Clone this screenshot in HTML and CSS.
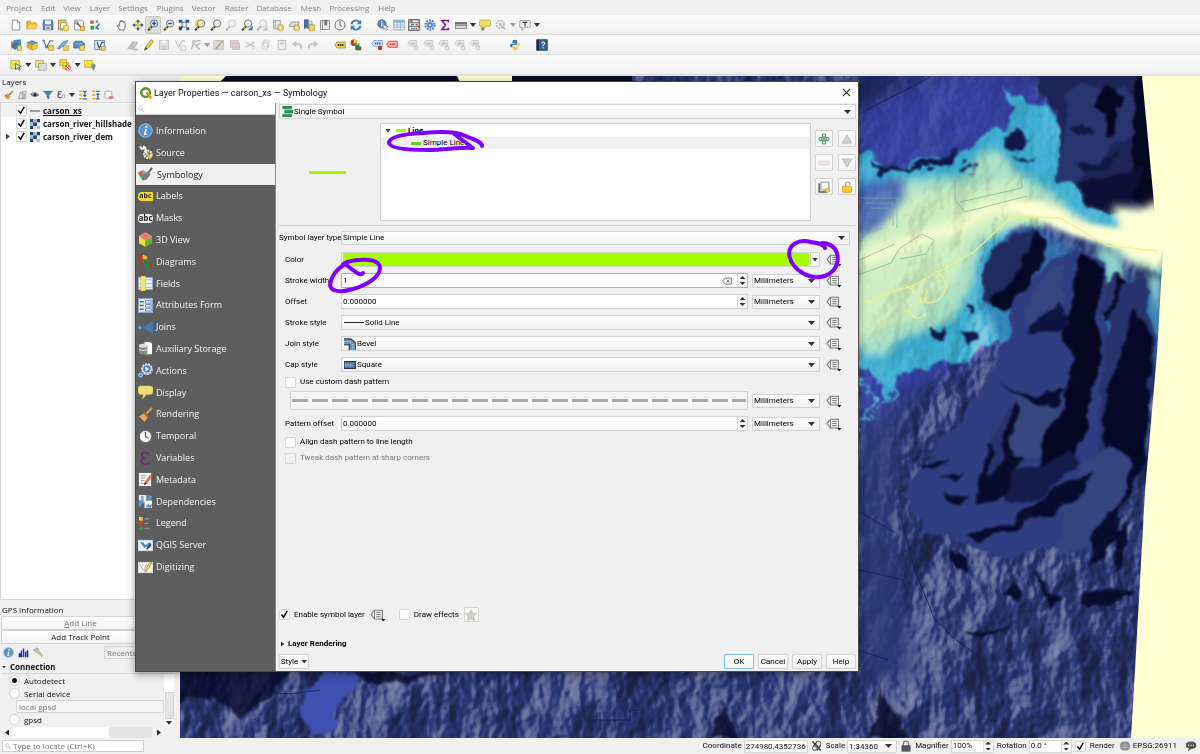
FILE: index.html
```html
<!DOCTYPE html>
<html lang="en">
  <head>
    <meta charset="UTF-8" />
    <title>QGIS</title>
    <meta name="viewport" content="width=device-width, initial-scale=1.0" />
    <link rel="stylesheet" href="styles.css">
  </head>
  <body>
    <!-- icon sprite -->
    <svg class="sprite" aria-hidden="true">
      <symbol id="new" viewBox="0 0 16 16"><path d="M3 1.500h7l3 3v10H3z" fill="#fff" stroke="#777"/><path d="M10 1.500v3h3" fill="none" stroke="#777"/></symbol>
      <symbol id="open" viewBox="0 0 16 16"><path d="M1 13V3h5l1 2h6v2" fill="#e8b830" stroke="#c79a1c"/><path d="M1 13L3.500 6.500H15L13 13z" fill="#fcd25a" stroke="#d8a628"/></symbol>
      <symbol id="save" viewBox="0 0 16 16"><rect x="1.500" y="1.500" width="13" height="13" rx="1" fill="#5b87bd" stroke="#3c648f"/><rect x="4" y="2" width="8" height="5" fill="#e8eef5"/><rect x="4" y="9" width="8" height="5.500" fill="#ddd"/><path d="M5 11h6M5 13h6" stroke="#777"/></symbol>
      <symbol id="layout" viewBox="0 0 16 16"><path d="M2 1.500h10v13H2z" fill="#f2cf4a" stroke="#8d7b32"/><rect x="5" y="5" width="8" height="8" fill="#fff" stroke="#888"/><rect x="9" y="9" width="6" height="6" fill="#fbe27a" stroke="#c79a1c"/></symbol>
      <symbol id="layoutmgr" viewBox="0 0 16 16"><path d="M2 1.500h10l2 2v11H2z" fill="#f5f5f5" stroke="#888"/><path d="M5 5l7 7" stroke="#666" stroke-width="2"/><circle cx="5" cy="5" r="2" fill="none" stroke="#666"/><rect x="10" y="10" width="5" height="5" fill="#f6d04d" stroke="#b98d1c"/></symbol>
      <symbol id="style" viewBox="0 0 16 16"><circle cx="4" cy="4" r="2.500" fill="#d9432f"/><rect x="9" y="2" width="3" height="3" fill="#777"/><rect x="2" y="9" width="5" height="5" fill="#3f9a56"/><path d="M9 13l5-7" stroke="#6d6d6d" stroke-width="2"/><path d="M9 10l4 4" stroke="#4379b5" stroke-width="2"/></symbol>
      <symbol id="pan" viewBox="0 0 16 16"><path d="M5 14.500L2 9.500c-.8-1.500.8-2 1.600-1L5 10V4c0-1.300 1.600-1.300 1.700 0V2.500c0-1.300 1.800-1.300 1.800 0V4c.2-1.300 1.800-1.200 1.800.2V5c.3-1 1.900-1 1.900.5V11l-1.500 3.500z" fill="#fff" stroke="#444"/></symbol>
      <symbol id="pansel" viewBox="0 0 16 16"><path d="M8 .5l2.500 2.500L8 5.500 5.500 3zM8 10.500l2.500 2.500L8 15.500 5.500 13zM3 5.500L5.500 8 3 10.500.5 8zM13 5.500L15.500 8 13 10.500 10.500 8z" fill="#2e5d98"/><path d="M8 5.800l2.200 2.200L8 10.200 5.800 8zM4 3.500l1.500 1.500M12 3.500L10.500 5M4 12.500L5.500 11M12 12.500L10.500 11" fill="#f3cf3f" stroke="#e8bf2e" stroke-width="1.800"/></symbol>
      <symbol id="lens" viewBox="0 0 16 16"><path d="M6.500 10L1.500 15" stroke="#2c2c2c" stroke-width="2.400"/><path d="M5 11.500l-1.500 1.500" stroke="#e6bd2e" stroke-width="2"/><circle cx="9.500" cy="6" r="4.800" fill="#e9f0f7" stroke="#666" stroke-width="1.200"/></symbol>
      <symbol id="zoomin" viewBox="0 0 16 16"><use href="#lens"/><path d="M9.500 3v6M6.500 6h6" stroke="#2b5ea0" stroke-width="1.800"/></symbol>
      <symbol id="zoomout" viewBox="0 0 16 16"><use href="#lens"/><path d="M6.500 6h6" stroke="#2b5ea0" stroke-width="2"/></symbol>
      <symbol id="zoomfull" viewBox="0 0 16 16"><path d="M1 1h5v4H1zM10 1h5v4h-5zM1 10h4v5H1zM11 11h4v4h-4z" fill="#2e5d98"/><circle cx="8.500" cy="7.500" r="3.500" fill="#dce8f5" stroke="#555"/><path d="M6 10l-3.500 4" stroke="#333" stroke-width="2"/></symbol>
      <symbol id="zoomsel" viewBox="0 0 16 16"><rect x="2" y="1" width="9" height="9" fill="#f4d43c"/><use href="#lens"/><circle cx="9.500" cy="6" r="3.500" fill="#faedaa"/></symbol>
      <symbol id="zoomlast" viewBox="0 0 16 16"><use href="#lens"/><path d="M15.500 9v6H9l3-3z" fill="#3f78b8"/></symbol>
      <symbol id="newmap" viewBox="0 0 16 16"><path d="M2 2h9v11H2zM4.500 2v11" fill="#e8e8e8" stroke="#888"/><rect x="8" y="8" width="7" height="7" rx="1" fill="#f6d659" stroke="#bb921e"/><path d="M11.500 9.500v4M9.500 11.500h4" stroke="#fff"/></symbol>
      <symbol id="new3d" viewBox="0 0 16 16"><path d="M1 9l4-5h10l-2 6H2z" fill="#dcdcdc" stroke="#888"/><rect x="8" y="8" width="7" height="7" rx="1" fill="#f6d659" stroke="#bb921e"/><path d="M11.500 9.500v4M9.500 11.500h4" stroke="#fff"/></symbol>
      <symbol id="bookmark" viewBox="0 0 16 16"><path d="M2 1h5v12l-2.500-2L2 13z" fill="#4077ab" stroke="#2e587f"/><path d="M8 3h4v5H8z" fill="#ddd" stroke="#999"/><rect x="8" y="8" width="7" height="7" fill="#f6d659" stroke="#bb921e"/></symbol>
      <symbol id="bookmarks" viewBox="0 0 16 16"><path d="M2 2h12v12H2z" fill="#ececec" stroke="#777"/><path d="M7 1h4v8L9 7.500 7 9z" fill="#777"/><path d="M4.500 2v12" stroke="#777"/></symbol>
      <symbol id="clock" viewBox="0 0 16 16"><circle cx="8" cy="8" r="6.700" fill="#f7f7f7" stroke="#666" stroke-width="1.300"/><path d="M8 3v5l3 2" fill="none" stroke="#444" stroke-width="1.200"/></symbol>
      <symbol id="refresh" viewBox="0 0 16 16"><path d="M2 7a6 6 0 0 1 10.500-3M14 9A6 6 0 0 1 3.500 12" fill="none" stroke="#3c7cc0" stroke-width="2.600"/><path d="M15 1v6H9zM1 15V9h6z" fill="#3c7cc0"/></symbol>
      <symbol id="identify" viewBox="0 0 16 16"><circle cx="6.500" cy="6.500" r="5.500" fill="#4e86c2" stroke="#2f5f96"/><path d="M6.500 5.500V10M6.500 3v1.500" stroke="#fff" stroke-width="2"/><path d="M8 7l7 3.500-3 .7 2 3-1.500 1-2-3-2 2z" fill="#fff" stroke="#555" stroke-width=".8"/></symbol>
      <symbol id="table" viewBox="0 0 16 16"><rect x="1" y="1.500" width="14" height="13" fill="#eef4fa" stroke="#7da0c5"/><rect x="1" y="1.500" width="14" height="3.500" fill="#8bb0d8"/><path d="M1 8h14M1 11h14M5.500 2v12M10 2v12" stroke="#8bb0d8"/></symbol>
      <symbol id="calc" viewBox="0 0 16 16"><rect x="1" y="1" width="14" height="14" fill="#f4f4f4" stroke="#555" stroke-width="1.500"/><path d="M1 5h14M1 10h14" stroke="#555"/><path d="M3 3h3M10 7.500h3" stroke="#d33" stroke-width="2.500"/><path d="M4 7.500h4" stroke="#396" stroke-width="2.500"/><path d="M4 12.500h8" stroke="#666" stroke-width="2" stroke-dasharray="2 1"/></symbol>
      <symbol id="gear" viewBox="0 0 16 16"><circle cx="8" cy="8" r="6" fill="none" stroke="#4e82bf" stroke-width="3" stroke-dasharray="2.400 1.360"/><circle cx="8" cy="8" r="4" fill="#4e82bf" stroke="#86aedb" /><circle cx="8" cy="8" r="1.500" fill="#e3edf8"/></symbol>
      <symbol id="sigma" viewBox="0 0 16 16"><path d="M12.500 4.500V2H4l4.500 6L4 14h8.500v-2.500" fill="none" stroke="#7a1d80" stroke-width="2.200"/></symbol>
      <symbol id="measure" viewBox="0 0 16 16"><rect x="0" y="4" width="16" height="3.500" fill="#777"/><rect x=".5" y="8.500" width="15" height="4" fill="#d5dde4" stroke="#777"/></symbol>
      <symbol id="tip" viewBox="0 0 16 16"><path d="M2.500 1.500h11q2 0 2 2v4q0 2-2 2H9L5 14V9.500H2.500q-2 0-2-2v-4q0-2 2-2z" fill="#efdf62" stroke="#b3a336"/><circle cx="5" cy="13" r="2.500" fill="#7aa15c"/></symbol>
      <symbol id="target" viewBox="0 0 16 16"><circle cx="7" cy="7" r="5" fill="none" stroke="#bbb" stroke-width="2.500" stroke-dasharray="2.600 1.300"/><circle cx="7" cy="7" r="2" fill="#bbb"/><path d="M9 9l5 5" stroke="#bbb" stroke-width="2"/></symbol>
      <symbol id="textann" viewBox="0 0 16 16"><path d="M1 2h14v9H7l-3 4v-4H1z" fill="#eef0f2" stroke="#8b8f94"/><path d="M5 4.500h6M8 4.500V10" stroke="#333" stroke-width="1.400"/></symbol>
      <symbol id="source" viewBox="0 0 16 16"><path d="M1 4l6-1 1 8-6 2z" fill="#e96c36"/><path d="M5 2l9-1v8l-8 2z" fill="#4c8fce" stroke="#2a5680" stroke-width=".7"/><path d="M2 8l8-2 3 5-7 3z" fill="#3a78b4" stroke="#2a5680" stroke-width=".7"/><rect x="10" y="9" width="5" height="6" fill="#f6d659" stroke="#bb921e"/></symbol>
      <symbol id="gpkg" viewBox="0 0 16 16"><path d="M1 5l7-3 7 3-7 3z" fill="#5f9bd2" stroke="#555" stroke-width=".6"/><path d="M1 5l7 3v7l-7-3z" fill="#e2ad26"/><path d="M15 5L8 8v7l7-3z" fill="#f7cf45" stroke="#8b6b12" stroke-width=".6"/></symbol>
      <symbol id="vec" viewBox="0 0 16 16"><path d="M2 2l4 9 5-9 4 1" fill="none" stroke="#4b6d88" stroke-width="1.400"/><circle cx="2" cy="2" r="1.500" fill="#4b6d88"/><circle cx="6" cy="11" r="1.700" fill="#4b6d88"/><rect x="9" y="9" width="6" height="6" fill="#f6d659" stroke="#bb921e"/></symbol>
      <symbol id="feather" viewBox="0 0 16 16"><path d="M1 13C4 7 9 3 14 2c-1 5-6 7-11 11z" fill="#85b5e0" stroke="#3e6c98"/><rect x="9" y="9" width="6" height="6" fill="#f6d659" stroke="#bb921e"/></symbol>
      <symbol id="mem" viewBox="0 0 16 16"><path d="M3 3h9l3 3v6H1V5z" fill="#5b8fc8" stroke="#34618f"/><path d="M3 6h9" stroke="#9dc0e4"/><rect x="9" y="9" width="6" height="6" fill="#f6d659" stroke="#bb921e"/></symbol>
      <symbol id="virtual" viewBox="0 0 16 16"><rect x="1" y="2" width="13" height="12" fill="#dbe9f5" stroke="#55799c"/><path d="M4 4l3 8 4-8 2 1" fill="none" stroke="#2e557b" stroke-width="1.500"/><rect x="10" y="10" width="5" height="5" fill="#f6d659" stroke="#bb921e"/></symbol>
      <symbol id="pencil" viewBox="0 0 16 16"><path d="M2 15l1.500-4.500L11 1l3 2.300L6 13z" fill="#f1cf45" stroke="#8f7727"/><path d="M2 15l1.500-4.500L6 13z" fill="#444"/></symbol>
      <symbol id="pencils" viewBox="0 0 16 16"><path d="M1 13l7-10 2 1-6 9zM5 13l7-9 2 1-6 9z" fill="#c9c9c9" stroke="#aaa"/><path d="M9 14h6" stroke="#aaa" stroke-width="2"/></symbol>
      <symbol id="gsave" viewBox="0 0 16 16"><rect x="2" y="2" width="12" height="12" fill="#ddd" stroke="#bbb"/><rect x="5" y="2" width="6" height="4" fill="#f6f6f6"/><path d="M5 10h6M5 12h6" stroke="#bbb"/></symbol>
      <symbol id="gvec" viewBox="0 0 16 16"><path d="M2 2l4 9 5-9 4 1" fill="none" stroke="#c2c2c2" stroke-width="1.500"/><rect x="9" y="9" width="6" height="6" fill="#eee" stroke="#c2c2c2"/></symbol>
      <symbol id="gvertex" viewBox="0 0 16 16"><path d="M2 14L5 3l9-1M3 4l10 10" fill="none" stroke="#b8b8b8" stroke-width="1.700"/><rect x="3" y="1" width="4" height="4" fill="#ccc"/><path d="M9 9l5-4" stroke="#b8b8b8" stroke-width="2"/></symbol>
      <symbol id="gedit" viewBox="0 0 16 16"><rect x="1" y="2" width="13" height="12" fill="#ded8d0" stroke="#c4beb6"/><path d="M4 13l9-11" stroke="#a9a49d" stroke-width="2"/></symbol>
      <symbol id="gdel" viewBox="0 0 16 16"><path d="M2 2h10v9H2zM5 5h9v9H5z" fill="#ddd0cf" stroke="#c0b4b3"/></symbol>
      <symbol id="cut" viewBox="0 0 16 16"><path d="M2 4l11 6M2 11l11-6" stroke="#c0c0c0" stroke-width="1.600"/><circle cx="12.500" cy="4.500" r="1.800" fill="none" stroke="#c0c0c0"/><circle cx="12.500" cy="11" r="1.800" fill="none" stroke="#c0c0c0"/></symbol>
      <symbol id="copy" viewBox="0 0 16 16"><path d="M5 1.500h7v9H5zM3 4.500h7v9H3z" fill="#f3f3f3" stroke="#c4c4c4"/></symbol>
      <symbol id="paste" viewBox="0 0 16 16"><rect x="3" y="2" width="10" height="12" fill="#eee" stroke="#c0c0c0" stroke-width="1.300"/><path d="M6 2h4M5 6h6" stroke="#c0c0c0" stroke-width="2"/></symbol>
      <symbol id="undo" viewBox="0 0 16 16"><path d="M13 13c2-5-1-7-7-6" fill="none" stroke="#c6c6c6" stroke-width="2.500"/><path d="M7 2v9L1 7z" fill="#c6c6c6"/></symbol>
      <symbol id="redo" viewBox="0 0 16 16"><path d="M3 13C1 8 4 6 10 7" fill="none" stroke="#c6c6c6" stroke-width="2.500"/><path d="M9 2v9l6-4z" fill="#c6c6c6"/></symbol>
      <symbol id="tag" viewBox="0 0 16 16"><path d="M1 8l3-4h11v8H4z" fill="#f2d43a" stroke="#a48a1d"/><path d="M5 8h8" stroke="#333" stroke-width="2.500" stroke-dasharray="2 .8"/></symbol>
      <symbol id="diagram" viewBox="0 0 16 16"><path d="M6 6V1a5 5 0 0 1 4.500 3z" fill="#f4cf2b"/><circle cx="5" cy="5" r="4.200" fill="#ca2f2b"/><path d="M5 5V.8A4.200 4.200 0 0 1 9 6z" fill="#f2cf31"/><path d="M5 5l4 1-4 3.200z" fill="#2b9145"/><path d="M7 8h3v7H7zM10 6h2.500v9H10z" fill="#1f8744"/><path d="M12 10h3v5h-3z" fill="#d2262a"/></symbol>
      <symbol id="tagpin" viewBox="0 0 16 16"><path d="M1 6l3-4h11v8H4z" fill="#cfe0f2" stroke="#6b96c4"/><path d="M5 6h8" stroke="#3f689a" stroke-width="2.500" stroke-dasharray="2 .8"/><circle cx="12" cy="12" r="3" fill="#c92e2e"/></symbol>
      <symbol id="tagred" viewBox="0 0 16 16"><path d="M1 7l3-4h11v8H4z" fill="#f9c8c8" stroke="#e24444" stroke-width="1.400"/><path d="M5 7h8" stroke="#e24444" stroke-width="2.500" stroke-dasharray="2 .8"/></symbol>
      <symbol id="gtag" viewBox="0 0 16 16"><path d="M1 6l3-4h9v7H4z" fill="#e4e4e0" stroke="#c3c3bf"/><path d="M5 6h6" stroke="#bbb" stroke-width="2"/><circle cx="12" cy="12" r="2.500" fill="#eee" stroke="#bbb" stroke-width="1.200"/></symbol>
      <symbol id="python" viewBox="0 0 16 16"><path d="M8 1c-3 0-3.500 1-3.500 3v1.500H8v.8H3C1 6.300 1 11 3 11h1.500V9q0-1.500 2-1.500h3q1.500 0 1.500-1.500V3.500Q11 1 8 1z" fill="#3a75ae"/><path d="M8 15c3 0 3.500-1 3.500-3v-1.500H8v-.8h5c2 0 2-4.700 0-4.700h-1.300v2q0 1.500-2 1.500h-3Q5.200 8.500 5.200 10v2.500Q5.200 15 8 15z" fill="#f4cc3b"/></symbol>
      <symbol id="help" viewBox="0 0 16 16"><rect x="1" y="1" width="14" height="14" fill="#38628f" stroke="#20364e"/><rect x="1" y="1" width="3" height="14" fill="#1c2d40"/><path d="M7.500 6q0-2 2-2t2 2q0 1-2 2.500v1M9.500 11v1.500" fill="none" stroke="#fff" stroke-width="1.400"/></symbol>
      <symbol id="select" viewBox="0 0 16 16"><rect x="1" y="2" width="12" height="11" fill="#f6e04f" stroke="#8b8b50" stroke-dasharray="2 1"/><path d="M7 6l8 4-3.500.7 2 3.300-1.500 1-2-3.500L7.500 14z" fill="#fff" stroke="#444"/></symbol>
      <symbol id="selectform" viewBox="0 0 16 16"><rect x="1" y="2" width="10" height="9" fill="#f3df6d" stroke="#9b9b9b"/><rect x="5" y="6" width="10" height="9" fill="#d8dde2" stroke="#999"/></symbol>
      <symbol id="deselect" viewBox="0 0 16 16"><path d="M1 1h9v8H1zM5 5h8v8H5z" fill="#f6df3c" stroke="#b19b2c"/><circle cx="11.500" cy="11.500" r="3.500" fill="#fff" stroke="#d33"/><path d="M9.500 9.500l4 4m0-4l-4 4" stroke="#d33" stroke-width="1.300"/></symbol>
      <symbol id="selectloc" viewBox="0 0 16 16"><rect x="1" y="2" width="10" height="9" fill="#f8e13d" stroke="#c1a62d"/><path d="M10 9a2.500 2.500 0 0 1 5 0q0 2-2.500 6Q10 11 10 9z" fill="#7c96ad" stroke="#55708a" stroke-width=".7"/></symbol>
      <symbol id="brush" viewBox="0 0 16 16"><path d="M8 8l6-6" stroke="#b56a28" stroke-width="2"/><path d="M1 9l5-3 4 4-3 4-3-.5z" fill="#eb9b3b" stroke="#a8661d" stroke-width=".6"/><path d="M3 8l4 4" stroke="#c33" stroke-width="1.500"/></symbol>
      <symbol id="addgroup" viewBox="0 0 16 16"><path d="M2 14l4-11 6 11zM9 2h5v12H9z" fill="#ddd" stroke="#888"/><circle cx="11" cy="9" r="3" fill="#aeb8b0"/></symbol>
      <symbol id="eye" viewBox="0 0 16 16"><path d="M1 7q6-6 13 1-7 5-13-1z" fill="#8ea4b8" stroke="#444"/><circle cx="8" cy="7.500" r="2.500" fill="#222"/></symbol>
      <symbol id="filter" viewBox="0 0 16 16"><path d="M1 2h14l-5.500 6v6l-3-1.500V8z" fill="#4c82b9" stroke="#345f8d"/></symbol>
      <symbol id="expr" viewBox="0 0 16 16"><path d="M9 3Q3 1 3.500 4.500 4 7 7 6.500 2.500 7 3 10q1 3.500 6 1.500" fill="none" stroke="#6c447a" stroke-width="1.700"/><path d="M10 13V8h4v5" fill="none" stroke="#888"/></symbol>
      <symbol id="expand" viewBox="0 0 16 16"><path d="M2 2h5M2 8h5M2 14h5" stroke="#e0a52a" stroke-width="2.500"/><path d="M8 2h6M8 14h6" stroke="#456f9c" stroke-width="2"/><path d="M11 3v6" stroke="#2d629c" stroke-width="2"/><path d="M8 8h6l-3 4z" fill="#2d629c"/></symbol>
      <symbol id="collapse" viewBox="0 0 16 16"><path d="M2 2h5M2 8h5M2 14h5" stroke="#e0a52a" stroke-width="2.500"/><path d="M8 2h6M8 14h6" stroke="#456f9c" stroke-width="2"/><path d="M11 13V7" stroke="#2d629c" stroke-width="2"/><path d="M8 8h6l-3-4z" fill="#2d629c"/></symbol>
      <symbol id="remove" viewBox="0 0 16 16"><rect x="1.500" y="2" width="11" height="11" rx="1" fill="#f4f4f4" stroke="#888"/><rect x="8" y="10" width="7" height="4" rx="1" fill="#ee6b6b"/></symbol>
      <symbol id="raster" viewBox="0 0 16 16"><path d="M0 0h16v16H0z" fill="#dfe9f3"/><path d="M0 0h5v5H0zM11 0h5v5h-5zM5 5h6v6H5zM0 11h5v5H0z" fill="#22456b"/><path d="M5 0h6v5H5zM11 11h5v5h-5zM0 5h5v6H0z" fill="#9dbbd6"/></symbol>
      <symbol id="search" viewBox="0 0 16 16"><circle cx="6.500" cy="6.500" r="4.500" fill="none" stroke="#999" stroke-width="1.500"/><path d="M10 10l5 5" stroke="#999" stroke-width="2"/></symbol>
      <symbol id="q" viewBox="0 0 16 16"><circle cx="7.500" cy="7.500" r="5.700" fill="none" stroke="#589632" stroke-width="3.400"/><path d="M7 6.500h3.500l5 5.500v3.500H13z" fill="#f0a31f"/><path d="M8 8l6 6" stroke="#589632" stroke-width="1.200"/></symbol>
      <!-- properties sidebar -->
      <symbol id="s-info" viewBox="0 0 16 16"><circle cx="8" cy="8" r="7.200" fill="#5b93d2" stroke="#a7c7ea"/><path d="M8.700 6.500L7.200 12h2" fill="none" stroke="#fff" stroke-width="1.800"/><circle cx="9" cy="4" r="1.200" fill="#fff"/></symbol>
      <symbol id="s-source" viewBox="0 0 16 16"><circle cx="10.500" cy="10" r="3.800" fill="none" stroke="#eee" stroke-width="2.500" stroke-dasharray="2 .8"/><path d="M2 1.500L4 4l2-.5L6.500 2q3 2 1 5L14 14" fill="none" stroke="#f2f2f2" stroke-width="2.200"/><path d="M9 9l5 5" stroke="#e5bd45" stroke-width="2.300"/></symbol>
      <symbol id="s-symb" viewBox="0 0 16 16"><path d="M0 6l6-3 4 5-5 6z" fill="#7fa6c4"/><path d="M0 6l4-2 2 4-4 2z" fill="#d75d55"/><path d="M3 12l-1-2 5-3 2 3-4 4z" fill="#59ad6a"/><path d="M7 8l3-3 3 3-4 5-4 1z" fill="#8a8172" stroke="#5f574c" stroke-width=".6"/><path d="M11 6l4-5" stroke="#635b52" stroke-width="2"/></symbol>
      <symbol id="s-3d" viewBox="0 0 16 16"><path d="M8 1l7 4-7 4-7-4z" fill="#ef7272" stroke="#fff" stroke-width=".5"/><path d="M1 5l7 4v7l-7-4z" fill="#f4dc35"/><path d="M15 5L8 9v7l7-4z" fill="#5fb531"/></symbol>
      <symbol id="s-fields" viewBox="0 0 16 16"><rect x=".5" y="1.500" width="15" height="13" fill="#eef4fa" stroke="#86a9cf"/><path d="M0 4h16M0 8h16M0 12h16" stroke="#9dbde0"/><rect x="3" y="0" width="5" height="16" fill="#f3e36e" stroke="#c8b43c" stroke-width=".5"/></symbol>
      <symbol id="s-form" viewBox="0 0 16 16"><rect x=".5" y=".5" width="15" height="15" fill="#e2ebf4" stroke="#86a9cf"/><path d="M2 4h4M2 8h4M2 12h4" stroke="#47688c" stroke-width="1.500"/><path d="M8 2.500h6v3H8zM8 7h6v2.500H8zM8 11h6v3H8z" fill="#fff" stroke="#5c83ad"/></symbol>
      <symbol id="s-join" viewBox="0 0 16 16"><path d="M5 8l11-7v14z" fill="#3f7ab5"/><circle cx="2" cy="8" r="1.800" fill="#6fa5da"/></symbol>
      <symbol id="s-aux" viewBox="0 0 16 16"><path d="M7 1h6l2 2v11H7z" fill="#fff"/><path d="M1 5v8q4 3 9 0V5z" fill="#8b8b8b"/><ellipse cx="5.500" cy="5" rx="4.500" ry="2" fill="#ddd"/><path d="M1 9q4 2.500 9 0" fill="none" stroke="#ddd"/></symbol>
      <symbol id="s-act" viewBox="0 0 16 16"><circle cx="9.500" cy="6.500" r="5" fill="#f2f6fb" stroke="#dde8f5" stroke-width="2.500" stroke-dasharray="2 1"/><circle cx="9.500" cy="6.500" r="4" fill="#4c84c2"/><path d="M8 4l4 2.500L8 9z" fill="#fff"/><circle cx="2.800" cy="13" r="2" fill="#5b93d2" stroke="#c6daf0"/></symbol>
      <symbol id="s-disp" viewBox="0 0 16 16"><path d="M3 1h10q3 0 3 3v3q0 3-3 3H9l-4 5 .5-5H3Q0 10 0 7V4q0-3 3-3z" fill="#ecdf7c" stroke="#cdbd4c" stroke-width=".6"/></symbol>
      <symbol id="s-rend" viewBox="0 0 16 16"><path d="M9 7l6-6" stroke="#e0a052" stroke-width="2"/><path d="M1 10l6-4 4 4-4 6z" fill="#e9a657"/><path d="M6 6l5 5" stroke="#9b6324" stroke-width="1.500"/></symbol>
      <symbol id="s-var" viewBox="0 0 16 16"><path d="M12 3Q5 0 4 4q0 3 5 3.500Q3 8 3.500 11.500 5 16 13 13" fill="none" stroke="#673272" stroke-width="1.900"/></symbol>
      <symbol id="s-meta" viewBox="0 0 16 16"><path d="M1 1h13v14H1z" fill="#f5f5f5"/><path d="M3 4h6M3 6.500h5M3 9h4M3 12h8" stroke="#999"/><path d="M7 11l6-8 2.500 1.500-6 8z" fill="#e46d40"/><path d="M7 11l2.500 1.500L6.500 14z" fill="#333"/></symbol>
      <symbol id="s-dep" viewBox="0 0 16 16"><path d="M1 1h8v8H1zM7 7h8v8H7z" fill="#f0f4f8"/><path d="M10 1l5 1-1 5-1.500-1.500-3 2-1-2 2.500-2zM1 7l5-1 0 5-1.500-1-2 4-2-1zM8 14l3-4 1 2 3-1-1 4-3-.5z" fill="#5d93d1"/><path d="M3 2h3v5H3z" fill="#7da9dc"/></symbol>
      <symbol id="s-leg" viewBox="0 0 16 16"><rect x="1" y="1" width="4" height="4" fill="#f5d32b"/><rect x="1" y="6" width="4" height="4" fill="#e23b24"/><circle cx="3" cy="13" r="2" fill="#24a148"/><path d="M7 3h5M7 8h4M7 13h5" stroke="#999" stroke-width="1.200"/></symbol>
      <symbol id="s-serv" viewBox="0 0 16 16"><rect x=".5" y="2.500" width="15" height="11" fill="#eef4f9" stroke="#d0d9e2"/><path d="M2 4l4 1 2 3 3-3 3 0-1 6-4-2-2 2z" fill="#4b83bd"/><path d="M9 12l5-5" stroke="#333" stroke-width="1.500"/></symbol>
      <symbol id="s-dig" viewBox="0 0 16 16"><rect x=".5" y="2.500" width="15" height="11" fill="#f1f1ef" stroke="#ddd"/><path d="M2 5l4 6 3-6 4 4" fill="none" stroke="#aaa"/><path d="M7 12l6-10 2 1-6 9z" fill="#ecd84e" stroke="#8a7c22" stroke-width=".6"/></symbol>
      <!-- symbology panel -->
      <symbol id="single" viewBox="0 0 16 16"><path d="M1 0h13v4H1zM4 6h12v4H4zM1 12h13v4H1z" fill="#1f9c57" stroke="#17643a" stroke-width=".8"/></symbol>
      <symbol id="plus" viewBox="0 0 16 16"><path d="M6 1.500h4V6h4.500v4H10v4.500H6V10H1.500V6H6z" fill="#e6f3e7" stroke="#4a8f56" stroke-width="1.300"/><path d="M8 4v8M4 8h8" stroke="#3c8549" stroke-width="1.300"/></symbol>
      <symbol id="minus" viewBox="0 0 16 16"><rect x="1" y="5.500" width="14" height="5" rx="1" fill="#f5e6e8" stroke="#dfc9cd"/></symbol>
      <symbol id="up" viewBox="0 0 16 16"><path d="M8 2.500l6.500 11h-13z" fill="#cfd2d4" stroke="#afb3b6"/></symbol>
      <symbol id="down" viewBox="0 0 16 16"><path d="M8 13.500l6.500-11h-13z" fill="#cfd2d4" stroke="#afb3b6"/></symbol>
      <symbol id="dup" viewBox="0 0 16 16"><path d="M1.500 3v11.500H12" fill="none" stroke="#555" stroke-width="2"/><path d="M4 1.500h10.500V12H4z" fill="#fff" stroke="#666"/><circle cx="12.500" cy="12.500" r="2.700" fill="#f6d659" stroke="#bb921e"/></symbol>
      <symbol id="lock" viewBox="0 0 16 16"><path d="M6 7V4q0-2.500 3-2.500T12 4v1" fill="none" stroke="#aaa" stroke-width="1.800"/><rect x="2" y="7" width="12" height="8" rx="1" fill="#f5cc2a" stroke="#c79d12"/></symbol>
      <symbol id="dd" viewBox="0 0 18 16"><path d="M5 2.500h9v10H5L1 7.500z" fill="#f2f2f2" stroke="#777" stroke-width="1.200"/><path d="M5 2.500v10" stroke="#777"/><path d="M7 5h5M7 7.500h5M7 10h5" stroke="#666"/><path d="M12.500 12.500h5l-2.500 3z" fill="#222"/></symbol>
      <symbol id="bevel" viewBox="0 0 16 16"><path d="M0 1h9l7 6v9H7V9H0z" fill="#6a90cc"/><path d="M0 1h9l7 6v9M0 9h7v7" fill="none" stroke="#27364f" stroke-width="1.600"/><path d="M0 5h8l4 4v7" fill="none" stroke="#ead94a" stroke-width="1.600" stroke-dasharray="2 2"/></symbol>
      <symbol id="cap" viewBox="0 0 18 12"><path d="M0 1h17v10H0z" fill="#5f87c4" stroke="#27364f" stroke-width="1.800"/><path d="M1 6h12" stroke="#ead94a" stroke-width="1.800" stroke-dasharray="2 2"/></symbol>
      <symbol id="clear" viewBox="0 0 16 16"><path d="M5 3h10v10H5L1 8z" fill="#f5f5f5" stroke="#666" stroke-width="1.300"/><path d="M7 5.500l5 5m0-5l-5 5" stroke="#666" stroke-width="1.400"/></symbol>
      <symbol id="star" viewBox="0 0 16 16"><path d="M8 1l2 4.500 5 .5-3.500 3.500 1 5.500L8 12.500 3.500 15l1-5.500L1 6l5-.5z" fill="#d5d0c8" stroke="#bdb8b0"/></symbol>
      <symbol id="chart" viewBox="0 0 16 16"><path d="M1 15V9h3v6zM4 15V5h2v10zM7 15V2h2v13zM10 15V7h2v8zM12.500 15V5H15v10z" fill="#1c2fc2"/></symbol>
      <symbol id="wrench" viewBox="0 0 16 16"><path d="M1 4l3 0 1-3q3 1 2.500 4L14 12l-1.500 2L6 7.500Q3 8 1 4z" fill="#d8d8d8" stroke="#555" stroke-width=".8"/><path d="M9 9l5 5" stroke="#e2cf3b" stroke-width="3"/></symbol>
      <symbol id="coord" viewBox="0 0 16 16"><path d="M2 2l11 12M3 9l5-7M8 14l5-7" stroke="#333" stroke-width="1.700"/><circle cx="10" cy="5" r="3.200" fill="#eee" stroke="#333"/><circle cx="5" cy="11" r="3" fill="#ddd" stroke="#333"/></symbol>
      <symbol id="padlock" viewBox="0 0 16 16"><path d="M4.500 8V5q0-3.500 3.500-3.500T11.500 5v3" fill="none" stroke="#777" stroke-width="1.700"/><rect x="2" y="7" width="12" height="8.500" fill="#555"/></symbol>
      <symbol id="globe" viewBox="0 0 16 16"><path d="M1 8q0-6 7-6t7 6-7 6-7-6z" fill="#888"/><path d="M1 7h14M2 10h12M8 2v12" stroke="#ddd" stroke-width=".7"/></symbol>
      <symbol id="msg" viewBox="0 0 16 16"><path d="M8 2q7 0 7 5t-7 5l-4 3 1-4Q1 10 1 7q0-5 7-5z" fill="#555"/><path d="M4 7h8" stroke="#fff" stroke-width="1.600" stroke-dasharray="1.600 1.600"/></symbol>
    </svg>

    <nav class="menubar">
      <a href="#">Project</a><a href="#">Edit</a><a href="#">View</a><a href="#">Layer</a><a href="#">Settings</a><a href="#">Plugins</a><a href="#">Vector</a><a href="#">Raster</a><a href="#">Database</a><a href="#">Mesh</a><a href="#">Processing</a><a href="#">Help</a>
    </nav>

    <div class="toolbar">
      <div class="group project-tools">
        <button aria-label="New project"><svg><use href="#new"/></svg></button>
        <button aria-label="Open project"><svg><use href="#open"/></svg></button>
        <button aria-label="Save project"><svg><use href="#save"/></svg></button>
        <button aria-label="New print layout"><svg><use href="#layout"/></svg></button>
        <button aria-label="Layout manager"><svg><use href="#layoutmgr"/></svg></button>
        <button aria-label="Style manager"><svg><use href="#style"/></svg></button>
      </div>
      <div class="group nav-tools">
        <button aria-label="Pan"><svg><use href="#pan"/></svg></button>
        <button aria-label="Pan to selection"><svg><use href="#pansel"/></svg></button>
        <button class="active" aria-label="Zoom in"><svg><use href="#zoomin"/></svg></button>
        <button aria-label="Zoom out"><svg><use href="#zoomout"/></svg></button>
        <button aria-label="Zoom full"><svg><use href="#zoomfull"/></svg></button>
        <button aria-label="Zoom to selection"><svg><use href="#zoomsel"/></svg></button>
        <button aria-label="Zoom to layer"><svg><use href="#lens"/></svg></button>
        <button disabled aria-label="Zoom to native resolution"><svg><use href="#lens"/></svg></button>
        <button aria-label="Zoom last"><svg><use href="#zoomlast"/></svg></button>
        <button disabled aria-label="Zoom next"><svg><use href="#zoomlast"/></svg></button>
        <button aria-label="New map view"><svg><use href="#newmap"/></svg></button>
        <button aria-label="New 3D map view"><svg><use href="#new3d"/></svg></button>
        <button aria-label="New bookmark"><svg><use href="#bookmark"/></svg></button>
        <button aria-label="Show bookmarks"><svg><use href="#bookmarks"/></svg></button>
        <button aria-label="Temporal controller"><svg><use href="#clock"/></svg></button>
        <button aria-label="Refresh"><svg><use href="#refresh"/></svg></button>
      </div>
      <div class="group attr-tools">
        <button aria-label="Identify"><svg><use href="#identify"/></svg></button>
        <button aria-label="Attribute table"><svg><use href="#table"/></svg></button>
        <button aria-label="Field calculator"><svg><use href="#calc"/></svg></button>
        <button aria-label="Toolbox"><svg><use href="#gear"/></svg></button>
        <button aria-label="Statistics"><svg><use href="#sigma"/></svg></button>
        <button aria-label="Measure"><svg><use href="#measure"/></svg></button>
      </div>
      <div class="group loose">
        <span class="arrow"></span>
        <button aria-label="Map tips"><svg><use href="#tip"/></svg></button>
        <button aria-label="Run feature action"><svg><use href="#target"/></svg></button>
        <span class="arrow light"></span>
        <button aria-label="Text annotation"><svg><use href="#textann"/></svg></button>
        <span class="arrow"></span>
      </div>
    </div>

    <div class="toolbar">
      <div class="group source-tools">
        <button aria-label="Data source manager"><svg><use href="#source"/></svg></button>
        <button aria-label="New GeoPackage layer"><svg><use href="#gpkg"/></svg></button>
        <button aria-label="New shapefile layer"><svg><use href="#vec"/></svg></button>
        <button aria-label="New SpatiaLite layer"><svg><use href="#feather"/></svg></button>
        <button aria-label="New scratch layer"><svg><use href="#mem"/></svg></button>
      </div>
      <button aria-label="New virtual layer"><svg><use href="#virtual"/></svg></button>
      <div class="group edit-tools">
        <button aria-label="Current edits"><svg><use href="#pencils"/></svg></button>
        <button aria-label="Toggle editing"><svg><use href="#pencil"/></svg></button>
        <button aria-label="Save edits"><svg><use href="#gsave"/></svg></button>
        <button aria-label="Add feature"><svg><use href="#gvec"/></svg></button>
        <button aria-label="Vertex tool"><svg><use href="#gvertex"/></svg></button>
        <span class="arrow light"></span>
        <button aria-label="Modify attributes"><svg><use href="#gedit"/></svg></button>
        <button aria-label="Delete selected"><svg><use href="#gdel"/></svg></button>
        <button aria-label="Cut"><svg><use href="#cut"/></svg></button>
        <button aria-label="Copy"><svg><use href="#copy"/></svg></button>
        <button aria-label="Paste"><svg><use href="#paste"/></svg></button>
        <button aria-label="Undo"><svg><use href="#undo"/></svg></button>
        <button aria-label="Redo"><svg><use href="#redo"/></svg></button>
      </div>
      <div class="group loose">
        <button aria-label="Layer labeling"><svg><use href="#tag"/></svg></button>
        <button aria-label="Layer diagrams"><svg><use href="#diagram"/></svg></button>
      </div>
      <div class="group label-tools">
        <button aria-label="Pinned labels"><svg><use href="#tagpin"/></svg></button>
        <button aria-label="Unplaced labels"><svg><use href="#tagred"/></svg></button>
      </div>
      <div class="group move-tools">
        <button aria-label="Pin label"><svg><use href="#gtag"/></svg></button>
        <button aria-label="Show label"><svg><use href="#gtag"/></svg></button>
        <button aria-label="Move label"><svg><use href="#gtag"/></svg></button>
        <button aria-label="Rotate label"><svg><use href="#gtag"/></svg></button>
        <button aria-label="Change label"><svg><use href="#gtag"/></svg></button>
      </div>
      <button class="python" aria-label="Python console"><svg><use href="#python"/></svg></button>
      <button aria-label="Help contents"><svg><use href="#help"/></svg></button>
    </div>

    <div class="toolbar">
      <div class="group select-tools">
        <button aria-label="Select features"><svg><use href="#select"/></svg></button><span class="arrow"></span>
        <button aria-label="Select by value"><svg><use href="#selectform"/></svg></button><span class="arrow"></span>
        <button aria-label="Deselect"><svg><use href="#deselect"/></svg></button><span class="arrow"></span>
        <button aria-label="Select by location"><svg><use href="#selectloc"/></svg></button>
      </div>
    </div>

    <main class="workspace">
      <aside class="dock">
        <h2>Layers</h2>
        <div class="dock-tools">
          <button aria-label="Layer styling"><svg><use href="#brush"/></svg></button>
          <button aria-label="Add group"><svg><use href="#addgroup"/></svg></button>
          <button aria-label="Map themes"><svg><use href="#eye"/></svg></button>
          <button aria-label="Filter legend"><svg><use href="#filter"/></svg></button>
          <button aria-label="Filter by expression"><svg><use href="#expr"/></svg></button>
          <span class="arrow"></span>
          <button aria-label="Expand all"><svg><use href="#expand"/></svg></button>
          <button aria-label="Collapse all"><svg><use href="#collapse"/></svg></button>
          <button aria-label="Remove layer"><svg><use href="#remove"/></svg></button>
        </div>
        <ul class="layers">
          <li class="current"><input type="checkbox" id="l1" checked><svg viewBox="0 0 10 10"><path d="M0 5h10" stroke="#4a4462"/></svg><label for="l1"><u>carson_xs</u></label></li>
          <li><input type="checkbox" id="l2" checked><svg><use href="#raster"/></svg><label for="l2">carson_river_hillshade</label></li>
          <li class="closed"><input type="checkbox" id="l3" checked><svg><use href="#raster"/></svg><label for="l3">carson_river_dem</label></li>
        </ul>
        <h2>GPS Information</h2>
        <button class="wide" disabled><u>A</u>dd Line</button>
        <button class="wide">Add Track Point</button>
        <div class="gps-tools">
          <button aria-label="Position"><svg><use href="#s-info"/></svg></button>
          <button aria-label="Signal"><svg><use href="#chart"/></svg></button>
          <button aria-label="Options"><svg><use href="#wrench"/></svg></button>
          <button class="recenter">Recenter</button>
        </div>
        <h3>Connection</h3>
        <div class="gps-scroll">
          <div class="gps-list">
            <label><input type="radio" name="gps" checked>Autodetect</label>
            <label><input type="radio" name="gps">Serial device</label>
            <input type="text" value="local gpsd" aria-label="Device" disabled>
            <label><input type="radio" name="gps">gpsd</label>
          </div>
          <div class="vbar"><span></span><i class="arrow"></i></div>
        </div>
        <div class="hbar"><i class="left"></i><span></span><i class="right"></i></div>
      </aside>

      <svg class="map" viewBox="180 76 1020 662" preserveAspectRatio="xMinYMin slice" aria-label="Map canvas">
        <defs>
          <filter id="relief" x="0" y="0" width="100%" height="100%" color-interpolation-filters="sRGB">
            <feTurbulence type="fractalNoise" baseFrequency=".012 .009" numOctaves="5" seed="21"/>
            <feDiffuseLighting surfaceScale="22" lighting-color="#fff"><feDistantLight azimuth="205" elevation="32"/></feDiffuseLighting>
            <feGaussianBlur stdDeviation=".6"/>
          </filter>
          <filter id="rough" x="-10%" y="-10%" width="120%" height="120%" color-interpolation-filters="sRGB">
            <feTurbulence type="fractalNoise" baseFrequency=".07" numOctaves="4" seed="3"/>
            <feDisplacementMap in="SourceGraphic" scale="18" xChannelSelector="R" yChannelSelector="G"/>
            <feGaussianBlur stdDeviation="1"/>
          </filter>
          <filter id="craggy" x="-10%" y="-10%" width="120%" height="120%" color-interpolation-filters="sRGB">
            <feTurbulence type="fractalNoise" baseFrequency=".04" numOctaves="4" seed="8"/>
            <feDisplacementMap in="SourceGraphic" scale="16" xChannelSelector="R" yChannelSelector="G"/>
            <feGaussianBlur stdDeviation="1.300"/>
          </filter>
          <filter id="soft2" x="-20%" y="-20%" width="140%" height="140%"><feGaussianBlur stdDeviation="2"/></filter>
          <filter id="soft4" x="-20%" y="-20%" width="140%" height="140%"><feGaussianBlur stdDeviation="4"/></filter>
          <filter id="soft9" x="-30%" y="-30%" width="160%" height="160%"><feGaussianBlur stdDeviation="9"/></filter>
          <mask id="upland" maskUnits="userSpaceOnUse" x="180" y="76" width="1020" height="662">
            <rect x="180" y="76" width="1020" height="662" fill="#fff"/>
            <path d="M850 60h180l40 110 30 42 62 2v60l-60-20-60-28-60 20-14 96-60 70-20 90 30 180h-60z" fill="#3a3a3a" filter="url(#soft9)"/>
          </mask>
        </defs>
        <rect x="180" y="76" width="1020" height="662" fill="#2c3a78"/>
        <path d="M850 76h190l25 60v70L990 350 900 400l-50 30z" fill="#3641a0" filter="url(#soft9)"/>
        <path d="M850 70h100l-100 44z" fill="#1f2860" filter="url(#soft9)"/>
        <g filter="url(#rough)">
          <path d="M850 153l24 2 16 14 26-8 50-6 14-16 14-8 16-8 2-22-8-14 12 8 12 10 20-4 12 22 2 28 12 22 20 20 22 18 50 2 12-12 10 30 4 70-4 50-10-40-14-34-32-22-36-20-50-18-44 16-8 40 4 34 18 6-4 26-30 6-16 20-24-6-16 12-20-2-14 20-6 18-6-26-14-10-16-4z" fill="#3caed2"/>
        </g>
        <path d="M858 200l42-20 66-4 14-24 18-2 22 24 30 16 30 32 24 10 46-2 12-14 8 40-12 18-36-16-40-24-60-12-40 22-12 46-18 30-24 10-30 10-14 16-22-2-16-18z" fill="#a9e0c4" filter="url(#soft4)"/>
        <path d="M862 236l50-42 60-6 40-10 30 24 24 18-60 6-34 14-20 46-38 30-34 18-26 4z" fill="#cdeec0" filter="url(#soft4)"/>
        <path d="M850 184l54-6v20l-24 30-30 14z" fill="#4058b4" opacity=".8" filter="url(#soft4)"/>
        <path d="M850 262l40-12 30-12 40-12 28-18 32-2 38 8 30 16 30 8 42 2" fill="none" stroke="#ffffd0" stroke-width="14" opacity=".8" filter="url(#soft4)"/>
        <g mask="url(#upland)" class="shade"><rect x="180" y="76" width="1020" height="662" filter="url(#relief)"/></g>
        <!-- hills -->
        <g filter="url(#craggy)">
          <path d="M1038 66h106l12 130-20 12-26 8-24-10-18-26-10-30-2-40-20-26z" fill="#1c2556"/>
          <path d="M1066 96l24-12 20 12 20-10 8 20-4 30-22 10-10 20-26 18-20-6z" fill="#29356f"/>
          <path d="M1104 84l22 12-10 12-4 26-8 4 2-24-12-10zM1136 76h10l14 136-24-8-14-10 10-30 2-36z" fill="#040720"/>
          <path d="M1078 186l40-10 24-10-8 34-14 14-34-12z" fill="#0b1034"/>
          <path d="M1066 130l20-8 10 8-18 6zM1080 166l24-6 18-8-10 14-24 8z" fill="#101742"/>
        </g>
        <path d="M1000 206l40-4 36 22 50 6 36-12v40l-40-10-50-14-36-18z" fill="#ffffd4" filter="url(#soft2)"/>
        <path d="M1112 206l30 3 16-10 8 34-4 36-36-12z" fill="#ffffd4" filter="url(#soft4)"/>
        <path d="M1096 246l24 8 4 24-14 14-12-20zM1148 276l14 0-4 76-10-40z" fill="#8fd6cc" filter="url(#soft4)"/>
        <g fill="none" stroke="#f0f08a" stroke-width="1.300" opacity=".9"><path d="M855 299q16 8 28-5l30-8 25-14 36-20 38-36 48 2 48 28 50 5"/><path d="M905 285q20 12 15 18M935 270q20 16 3 30-20 9-10-10M910 310q4 14 16 4"/></g>
        <g fill="none" stroke="#78ab9c" opacity=".7"><path d="M855 276l36-13 8-14 23-15 12 6-8 14-26 5M960 202l62-14v-18M965 212l62-16M955 180v20l10 12M855 262l40-18"/><path d="M862 198h35v30M866 203h27v22M870 208h20v12M862 236l20-8"/></g>
        <g fill="#11184a" filter="url(#rough)">
          <path d="M870 158l18 8 30-2 24-6 16-12-6 16-22 8-26 0-24 6zM928 330h16v8h-16zM958 334l14-4 6 6-10 8zM966 308h8v5h-8zM1010 134l10-5 8 10-6 14-14-4zM1012 157l28 2-20 3zM975 160l-8 14-6-2z"/>
        </g>
        <g filter="url(#soft4)">
          <path d="M984 306q-8-42 16-64 22-16 44-8l30 16 30 14 2 40 18-22 22 0 16 34 0 50-60 20-100-40z" fill="#2a78b4" opacity=".8"/>
        </g>
        <g filter="url(#craggy)">
          <path d="M983 302q-6-34 16-58 22-18 42-10l8 10-22 40-18 26z" fill="#202b5f"/>
          <path d="M1036 232l12 8-8 22-26 46-22 0-2-10 22-16z" fill="#060a26"/>
          <path d="M1006 340l8-36 32-46 28-8 30 14 2 70 0 140-44 70-62 14-74-28-24-40 56-66 28-46z" fill="#2f3e80"/>
          <path d="M1048 266l14-6-2 40-10 20-24 6 4-26z" fill="#35457f"/>
          <path d="M1078 254l26 14-8 56 6 32-18 82-20 30-32 20 10-55 20-26 12-48-14-22 12-34z" fill="#050823"/>
          <path d="M1058 300l14 28-38 6-10-4 20-12z" fill="#0d1440"/>
          <path d="M1016 400l12 18-4 34-12 42-36 10 10-50 20-30z" fill="#080c2c"/>
          <path d="M996 436l14-34 0 24-10 40-12 8z" fill="#26336e"/>
          <path d="M1104 286q10-18 20-10l0 24-12 20-10-6z" fill="#2a376f"/>
          <path d="M1118 274l8 6-8 42-12 0z" fill="#060a26"/>
          <path d="M1122 282l22-4 12 66-2 40-12 60-4 34-20 30-30 34 10-80 6-120z" fill="#26336c"/>
          <path d="M1138 306l14 40-2 52-6 60-20 46-34 40 18-74-6-50 16-64z" fill="#060a28"/>
          <path d="M1084 460l26-14 22 12-10 42-30 46-34 8 10-60z" fill="#34447f"/>
          <path d="M1014 388l28 12 26-16-14 34-20 40-22 0 6-40z" fill="#36477f"/>
          <path d="M1010 474l-4 30 34-4 40-36-12-16-30 20z" fill="#141c4c"/>
        </g>
        <g fill="#080d2e" filter="url(#craggy)">
          <path d="M916 464l34-4-12 7zM940 478l24-8-10 10zM940 494l28 2-6 10-18-6zM965 536l46-14 40-30 44-22-22 36-46 16-44 20zM1000 384l30 12 26-2 24-22-26 32-22-2zM1094 536l14-26 14-4-8 32-12 22-14 6zM1114 530l14-8-6 40-10 10zM950 550l14 10 6 12-14-4zM1034 564l14 26 14 8-12 14zM964 632l48-4-20 6-26 2zM1080 600l28-12 30 2-20 10-28 8zM1010 580l12 14-6 10-14-8z"/>
        </g>
        <path d="M855 380l14 6 6 12-6 16-14 16M874 412l20-12v-26l20-28" fill="none" stroke="#50bfd4" stroke-width="2" filter="url(#rough)"/>
        <path d="M322 672l-22 34 8 32h22l8-34 30-32z" fill="#4050b0" filter="url(#rough)"/>
        <path d="M180 668h110l-20 30-30 20-30-24-30 6zM350 672h100l-80 14zM720 700l20 38h-24zM880 690l30 48h-40z" fill="#070b2a" opacity=".8" filter="url(#craggy)"/>
        <path d="M900 514l14 54 20 50 20 20 24 18M860 512l34 20M860 570l44 10M858 650l30 10M230 690l60 4 30-4M850 119l80-42M590 720h40v-10h10M600 712v18M615 712v18" fill="none" stroke="#141d50" opacity=".8"/>
        <path d="M225 76h232l4 6H218zM512 76h120v6H512z" fill="#070b25"/>
        <path d="M180 76h46l-8 8h-38zM457 76h55v8h-51zM1142 76l13 138 2 24 6 14-2 32-4 69-12 138-10 179-4 68h69V76z" fill="#ffffd4"/>
      </svg>
    </main>

    <footer class="statusbar">
      <div class="locator"><svg><use href="#search"/></svg><input type="text" placeholder="Type to locate (Ctrl+K)" aria-label="Locate"></div>
      <label for="coord-in">Coordinate</label><input class="coord" id="coord-in" type="text" value="274980,4352736">
      <svg><use href="#coord"/></svg>
      <label for="scale">Scale</label><select id="scale" class="scale"><option>1:34360</option></select>
      <svg><use href="#padlock"/></svg>
      <label for="mag">Magnifier</label><div class="spin"><input id="mag" type="text" value="100%"><span class="steps"><button aria-label="Increase"></button><button aria-label="Decrease"></button></span></div>
      <label for="rot">Rotation</label><div class="spin"><input id="rot" type="text" value="0.0 °"><span class="steps"><button aria-label="Increase"></button><button aria-label="Decrease"></button></span></div>
      <label class="check"><input type="checkbox" checked>Render</label>
      <button class="crs"><svg><use href="#globe"/></svg>EPSG:26911</button>
      <button class="msgs" aria-label="Messages"><svg><use href="#msg"/></svg></button>
    </footer>

    <section class="dialog" role="dialog" aria-label="Layer Properties">
      <header>
        <svg><use href="#q"/></svg>
        <h1>Layer Properties — carson_xs — Symbology</h1>
        <button class="close" aria-label="Close"><svg viewBox="0 0 10 10"><path d="M1 1l8 8M9 1L1 9" stroke="#222" stroke-width="1.200"/></svg></button>
      </header>
      <div class="dialog-body">
        <nav class="pages">
          <div class="page-search"><svg><use href="#search"/></svg><input type="text" aria-label="Search pages"></div>
          <ul>
            <li><a href="#"><svg><use href="#s-info"/></svg>Information</a></li>
            <li><a href="#"><svg><use href="#s-source"/></svg>Source</a></li>
            <li><a href="#" class="selected"><svg><use href="#s-symb"/></svg>Symbology</a></li>
            <li><a href="#"><span class="abc yellow">abc</span>Labels</a></li>
            <li><a href="#"><span class="abc">abc</span>Masks</a></li>
            <li><a href="#"><svg><use href="#s-3d"/></svg>3D View</a></li>
            <li><a href="#"><svg><use href="#diagram"/></svg>Diagrams</a></li>
            <li><a href="#"><svg><use href="#s-fields"/></svg>Fields</a></li>
            <li><a href="#"><svg><use href="#s-form"/></svg>Attributes Form</a></li>
            <li><a href="#"><svg><use href="#s-join"/></svg>Joins</a></li>
            <li><a href="#"><svg><use href="#s-aux"/></svg>Auxiliary Storage</a></li>
            <li><a href="#"><svg><use href="#s-act"/></svg>Actions</a></li>
            <li><a href="#"><svg><use href="#s-disp"/></svg>Display</a></li>
            <li><a href="#"><svg><use href="#s-rend"/></svg>Rendering</a></li>
            <li><a href="#"><svg><use href="#clock"/></svg>Temporal</a></li>
            <li><a href="#"><svg><use href="#s-var"/></svg>Variables</a></li>
            <li><a href="#"><svg><use href="#s-meta"/></svg>Metadata</a></li>
            <li><a href="#"><svg><use href="#s-dep"/></svg>Dependencies</a></li>
            <li><a href="#"><svg><use href="#s-leg"/></svg>Legend</a></li>
            <li><a href="#"><svg><use href="#s-serv"/></svg>QGIS Server</a></li>
            <li><a href="#"><svg><use href="#s-dig"/></svg>Digitizing</a></li>
          </ul>
        </nav>

        <div class="panel">
          <div class="combo renderer"><svg><use href="#single"/></svg><select aria-label="Renderer"><option>Single Symbol</option></select></div>

          <div class="symbol">
            <div class="preview"><span></span></div>
            <ul class="symbol-tree">
              <li class="root"><span class="swatch"></span>Line</li>
              <li class="child"><span class="swatch"></span>Simple Line</li>
            </ul>
            <div class="symbol-buttons">
              <button aria-label="Add symbol layer"><svg><use href="#plus"/></svg></button>
              <button aria-label="Move up"><svg><use href="#up"/></svg></button>
              <button aria-label="Remove symbol layer"><svg><use href="#minus"/></svg></button>
              <button aria-label="Move down"><svg><use href="#down"/></svg></button>
              <button aria-label="Duplicate"><svg><use href="#dup"/></svg></button>
              <button aria-label="Lock color"><svg><use href="#lock"/></svg></button>
            </div>
          </div>

          <div class="layer-type"><label for="type">Symbol layer type</label><select id="type"><option>Simple Line</option></select></div>

          <div class="form">
            <label for="color">Color</label>
            <div class="span color"><button id="color" aria-label="Color"></button><button class="drop" aria-label="Color menu"><span class="arrow"></span></button></div>
            <button class="dd" aria-label="Data defined color"><svg><use href="#dd"/></svg></button>

            <label for="width">Stroke width</label>
            <div class="spin focus"><input id="width" type="text" value="1"><button class="clear" aria-label="Clear"><svg><use href="#clear"/></svg></button><span class="steps"><button aria-label="Increase"></button><button aria-label="Decrease"></button></span></div>
            <select aria-label="Width unit"><option>Millimeters</option></select>
            <button class="dd" aria-label="Data defined width"><svg><use href="#dd"/></svg></button>

            <label for="offset">Offset</label>
            <div class="spin"><input id="offset" type="text" value="0.000000"><span class="steps"><button aria-label="Increase"></button><button aria-label="Decrease"></button></span></div>
            <select aria-label="Offset unit"><option>Millimeters</option></select>
            <button class="dd" aria-label="Data defined offset"><svg><use href="#dd"/></svg></button>

            <label for="stroke">Stroke style</label>
            <div class="combo span"><span class="solid"></span><select id="stroke"><option>Solid Line</option></select></div>
            <button class="dd" aria-label="Data defined stroke style"><svg><use href="#dd"/></svg></button>

            <label for="join">Join style</label>
            <div class="combo span"><svg><use href="#bevel"/></svg><select id="join"><option>Bevel</option></select></div>
            <button class="dd" aria-label="Data defined join style"><svg><use href="#dd"/></svg></button>

            <label for="cap-in">Cap style</label>
            <div class="combo span"><svg><use href="#cap"/></svg><select id="cap-in"><option>Square</option></select></div>
            <button class="dd" aria-label="Data defined cap style"><svg><use href="#dd"/></svg></button>
          </div>

          <label class="check dash-check"><input type="checkbox">Use custom dash pattern</label>

          <div class="form dash-form">
            <button class="dashes" aria-label="Dash pattern"><span></span></button>
            <select aria-label="Dash unit"><option>Millimeters</option></select>
            <button class="dd" aria-label="Data defined dash"><svg><use href="#dd"/></svg></button>

            <label for="poff">Pattern offset</label>
            <div class="spin"><input id="poff" type="text" value="0.000000"><span class="steps"><button aria-label="Increase"></button><button aria-label="Decrease"></button></span></div>
            <select aria-label="Pattern offset unit"><option>Millimeters</option></select>
            <button class="dd" aria-label="Data defined pattern offset"><svg><use href="#dd"/></svg></button>
          </div>

          <div class="dash-options">
            <label class="check"><input type="checkbox">Align dash pattern to line length</label>
            <label class="check off"><input type="checkbox" disabled>Tweak dash pattern at sharp corners</label>
          </div>

          <div class="effects">
            <label class="check"><input type="checkbox" checked>Enable symbol layer</label>
            <button class="dd" aria-label="Data defined enabled"><svg><use href="#dd"/></svg></button>
            <label class="check draw"><input type="checkbox">Draw effects</label>
            <button class="fx" aria-label="Customize effects"><svg><use href="#star"/></svg></button>
          </div>
          <h3 class="rendering">Layer Rendering</h3>
          <div class="actions">
            <button class="style-menu">Style <span class="arrow"></span></button>
            <button class="default">OK</button>
            <button>Cancel</button>
            <button>Apply</button>
            <button>Help</button>
          </div>
        </div>
      </div>
    </section>

    <!-- hand drawn highlights -->
    <svg class="marks" viewBox="0 0 1200 754" aria-hidden="true">
      <path d="M482 146c0-5-12-8-19-11-9-4-28-3-40-2-20 1-34 4-34 10 1 6 22 7 39 7 18 0 30-3 45-2l-20-15"/>
      <path d="M363 273c-3 3-6 0-10-3q-4-3-8-6c-8 5-14 13-15 21 1 8 14 7 23 4 14-4 27-12 27-21 0-8-12-9-22-8-9 1-15 3-15 5"/>
      <path d="M825 248c-1-4-7-5-14-6-8-2-15-1-20 5-5 8 1 19 10 25 9 6 20 7 28 2 8-5 11-15 7-23-2-5-8-8-14-8"/>
    </svg>
  </body>
</html>
```
FILE: styles.css
```css
* {
  box-sizing: border-box;
}

body {
  margin: 0;
  height: 100vh;
  display: flex;
  flex-direction: column;
  overflow: hidden;
  font-family: "Open Sans", "Noto Sans", sans-serif;
  font-size: 8px;
  line-height: 12px;
  color: #111;
  background: #f0f0f0;
}

button,
input,
select {
  font: inherit;
  color: inherit;
  margin: 0;
  padding: 0;
  border: 1px solid #d2d2d2;
  border-radius: 1px;
  background: #fff;
  min-width: 0;
}

button {
  display: flex;
  align-items: center;
  justify-content: center;
  background: linear-gradient(#fff, #f3f3f3);
}

select {
  appearance: none;
  height: 14px;
  padding: 0 1px;
  background: url("data:image/svg+xml,%3Csvg xmlns='http://www.w3.org/2000/svg' width='7' height='4'%3E%3Cpath d='M0 0h7L3.500 4z' fill='%23333'/%3E%3C/svg%3E") no-repeat right 4px center, linear-gradient(#fff, #f1f1f1);
}

ul {
  list-style: none;
  margin: 0;
  padding: 0;
}

h1, h2, h3 {
  margin: 0;
  font-size: 8px;
  font-weight: 400;
}

h3 {
  font-weight: 700;
}

svg {
  flex: none;
  width: 12px;
  height: 12px;
}

.sprite {
  display: none;
}

.arrow {
  flex: none;
  width: 6px;
  height: 4px;
  background: #333;
  clip-path: polygon(0 0, 100% 0, 50% 100%);
}

.arrow.light {
  background: #999;
}

input[type="checkbox"] {
  appearance: none;
  flex: none;
  width: 11px;
  height: 11px;
  border: 1px solid #d6d6d6;
}

input[type="checkbox"]:checked {
  background: #fff url("data:image/svg+xml,%3Csvg xmlns='http://www.w3.org/2000/svg' viewBox='0 0 10 10'%3E%3Cpath d='M1.500 5l2.500 3 4-7' fill='none' stroke='%23000' stroke-width='1.600'/%3E%3C/svg%3E") center / 9px no-repeat;
}

input[type="checkbox"]:disabled {
  background: #f0f0f0;
}

.check {
  display: flex;
  align-items: center;
  gap: 4px;
}

/* menu and toolbars */
.menubar {
  display: flex;
  align-items: center;
  gap: 8px;
  height: 15px;
  padding: 1px 6px 0;
}

.menubar a {
  color: #858585;
  text-decoration: none;
}

.menubar a:nth-child(even) {
  margin-left: 1px;
}

.toolbar {
  display: flex;
  align-items: center;
  gap: 7px;
  height: 20px;
  padding-left: 9px;
  background: linear-gradient(#fbfbfb, #efefef);
  border-top: 1px solid #fff;
  border-bottom: 1px solid #dedede;
}

.toolbar button {
  flex: none;
  width: 14px;
  height: 16px;
  border: 0;
  background: none;
}

.toolbar button.active {
  background: #dcdcdc;
  outline: 1px solid #c4c4c4;
}

.toolbar button:disabled {
  opacity: 0.35;
}

.group {
  display: flex;
  align-items: center;
  justify-content: space-between;
}

.project-tools {
  width: 93px;
  margin-right: 6px;
}

.nav-tools {
  width: 248px;
  margin-right: 6px;
}

.attr-tools {
  width: 92px;
  margin-right: -5px;
}

.loose {
  gap: 2px;
}

.source-tools {
  width: 77px;
}

.edit-tools {
  width: 194px;
  margin: 0 6px 0 12px;
}

.label-tools {
  width: 29px;
}

.move-tools {
  width: 76px;
}

.python {
  margin: 0 6px 0 19px;
}

.select-tools {
  width: 88px;
}

/* left dock */
.workspace {
  flex: 1;
  min-height: 0;
  display: flex;
  border-top: 1px solid #e4e4e4;
}

.dock {
  flex: none;
  width: 180px;
  display: flex;
  flex-direction: column;
}

.dock h2 {
  padding-left: 2px;
}

.dock-tools {
  display: flex;
  align-items: center;
  gap: 3px;
  height: 14px;
  padding-left: 4px;
}

.dock-tools button,
.gps-tools button {
  width: 10px;
  height: 10px;
  border: 0;
  background: none;
}

.dock-tools svg {
  width: 10px;
  height: 10px;
}

.layers {
  flex: 1;
  padding-top: 1px;
  margin-right: 6px;
  background: #fff;
  border: 1px solid #d5d5d5;
  font-weight: 700;
}

.layers li {
  display: flex;
  align-items: center;
  gap: 3px;
  height: 13px;
  padding-left: 15px;
}

.layers svg {
  width: 10px;
  height: 10px;
}

.layers .current {
  background: #f0f0f0;
}

.layers .closed::before {
  content: "";
  width: 4px;
  height: 6px;
  margin: 0 3px 0 -10px;
  background: #444;
  clip-path: polygon(0 0, 100% 50%, 0 100%);
}

.layers + h2 {
  padding-top: 4px;
}

.wide {
  flex: none;
  height: 14px;
  margin: 0 20px 0 1px;
}

.wide:disabled {
  color: #777;
}

.gps-tools {
  display: flex;
  align-items: center;
  gap: 5px;
  height: 17px;
  padding-left: 3px;
}

.gps-tools svg {
  width: 11px;
  height: 11px;
}

.gps-tools .recenter {
  justify-content: flex-start;
  width: 60px;
  height: 13px;
  margin-left: auto;
  margin-right: 16px;
  padding-left: 2px;
  border: 1px solid #d2d2d2;
  color: #777;
}

.dock h3 {
  display: flex;
  align-items: center;
  gap: 4px;
  padding-left: 2px;
}

.dock h3::before {
  content: "";
  width: 4px;
  height: 3px;
  background: #222;
  clip-path: polygon(0 0, 100% 0, 50% 100%);
}

.gps-scroll {
  display: flex;
  flex: none;
  height: 54px;
  margin: 0 6px 0 2px;
  border-top: 1px solid #d5d5d5;
}

.gps-list {
  flex: 1;
  display: flex;
  flex-direction: column;
  padding-left: 7px;
}

.gps-list label {
  display: flex;
  align-items: center;
  gap: 4px;
  height: 13px;
}

.gps-list input[type="radio"] {
  appearance: none;
  width: 11px;
  height: 11px;
  border: 1px solid #d0d0d0;
  border-radius: 50%;
}

.gps-list input:checked {
  background: radial-gradient(circle, #111 0 2px, #fff 3px);
}

.gps-list input[type="text"] {
  height: 13px;
  margin-left: 7px;
  padding-left: 2px;
  color: #777;
  background: #f6f6f6;
}

.vbar {
  display: flex;
  flex-direction: column;
  justify-content: flex-end;
  align-items: center;
  gap: 2px;
  width: 10px;
  padding-bottom: 2px;
  background: #fff;
}

.vbar span {
  width: 9px;
  height: 27px;
  background: #e4e4e4;
  border: 1px solid #d5d5d5;
}

.hbar {
  display: flex;
  align-items: center;
  gap: 6px;
  flex: none;
  height: 11px;
  margin: 0 16px 0 2px;
  padding: 0 3px;
  background: linear-gradient(90deg, #f0f0f0 10px, #fff 10px 107px, #e4e4e4 107px 150px, #f0f0f0 150px);
}

.hbar span {
  flex: 1;
}

.hbar i {
  width: 4px;
  height: 6px;
  background: #222;
  clip-path: polygon(0 0, 100% 50%, 0 100%);
}

.hbar .left {
  clip-path: polygon(100% 0, 0 50%, 100% 100%);
}

.map {
  flex: 1;
  width: auto;
  height: 100%;
  min-width: 0;
}

.shade {
  mix-blend-mode: hard-light;
  opacity: 0.4;
}

/* status bar */
.statusbar {
  display: flex;
  align-items: center;
  gap: 2px;
  height: 16px;
  padding: 0 3px 0 2px;
  font-family: Roboto, sans-serif;
}

.statusbar input,
.statusbar select {
  height: 13px;
  padding-left: 1px;
}

.statusbar svg {
  margin: 0 1px;
}

.statusbar button svg {
  margin: 0;
}

.statusbar input[type="checkbox"] {
  height: 11px;
}

.locator,
.page-search {
  display: flex;
  align-items: center;
  background: #fff;
}

.locator {
  width: 142px;
  height: 12px;
  margin-right: auto;
  border: 1px solid #cfcfcf;
  font-family: "Open Sans", sans-serif;
}

.statusbar .locator svg,
.page-search svg {
  width: 6px;
  height: 6px;
  margin: 0 2px;
}

.statusbar .locator input,
.page-search input {
  flex: 1;
  height: 10px;
  padding: 0;
  border: 0;
}

.locator input::placeholder {
  color: #777;
}

.coord {
  width: 64px;
}

.scale {
  width: 50px;
}

.statusbar .spin {
  width: 43px;
  height: 13px;
}

.statusbar .spin + label {
  margin-left: 1px;
}

.statusbar .check {
  margin: 0 2px 0 1px;
}

.crs,
.msgs {
  gap: 2px;
  border: 0;
  background: none;
}

.msgs {
  margin-left: 6px;
}

.spin {
  display: flex;
  align-items: stretch;
  height: 15px;
  border: 1px solid #d2d2d2;
  background: #fff;
}

.spin input {
  flex: 1;
  width: 0;
  height: auto;
  padding: 0 1px;
  border: 0;
  background: none;
}

.spin.focus {
  border-color: #7fbfee;
}

.spin .clear {
  border: 0;
  background: none;
  margin-right: 5px;
}

.spin .clear svg {
  width: 10px;
  height: 10px;
}

.steps {
  display: flex;
  flex-direction: column;
  justify-content: center;
  align-items: center;
  gap: 3px;
  width: 10px;
  border-left: 1px solid #e0e0e0;
  background: #f9f9f9;
}

.steps button {
  width: 6px;
  height: 3px;
  border: 0;
  border-radius: 0;
  background: #333;
  clip-path: polygon(50% 0, 100% 100%, 0 100%);
}

.steps button:last-child {
  clip-path: polygon(0 0, 100% 0, 50% 100%);
}

/* properties window, floats over the main window */
.dialog {
  position: absolute;
  left: 135px;
  top: 81px;
  width: 724px;
  height: 591px;
  display: flex;
  flex-direction: column;
  background: #f0f0f0;
  border: 1px solid #4a4a4a;
  box-shadow: 0 2px 8px rgba(0, 0, 0, 0.4);
}

.dialog header {
  display: flex;
  align-items: center;
  gap: 2px;
  height: 21px;
  padding: 0 7px 0 4px;
  background: #fff;
}

.dialog h1 {
  font-family: Roboto, sans-serif;
  font-size: 9px;
}

.close {
  margin-left: auto;
  border: 0;
  background: none;
}

.close svg {
  width: 9px;
  height: 9px;
}

.dialog-body {
  flex: 1;
  display: flex;
  min-height: 0;
}

.pages {
  flex: none;
  width: 140px;
  background: #5e5e5e;
  border-right: 1px solid #8a8a8a;
}

.page-search {
  height: 12px;
  border-bottom: 1px solid #ccc;
}

.pages ul {
  display: grid;
  grid-auto-rows: 1fr;
  height: 458px;
  margin-top: 5px;
}

.pages a {
  display: flex;
  align-items: center;
  gap: 3px;
  height: 100%;
  padding-left: 2px;
  color: #f2f2f2;
  font-size: 9px;
  text-decoration: none;
}

.pages li svg {
  width: 15px;
  height: 15px;
}

.pages a.selected {
  gap: 4px;
  color: #222;
  background: #f0f0f0;
}

.abc {
  width: 15px;
  height: 9px;
  border-radius: 4px;
  background: #eee;
  color: #222;
  font-size: 8px;
  font-weight: 700;
  line-height: 8px;
  text-align: center;
}

.abc.yellow {
  border-radius: 4px 1px 1px 4px;
  background: #f4dc2c;
  font-size: 7px;
}

.panel {
  flex: 1;
  min-width: 0;
  display: flex;
  flex-direction: column;
  padding: 1px 2px 2px 3px;
  font-family: Roboto, sans-serif;
  color: #000;
}

.combo {
  display: flex;
  align-items: center;
  height: 15px;
  padding-left: 2px;
  border: 1px solid #d2d2d2;
  background: linear-gradient(#fff, #f1f1f1);
}

.combo select {
  flex: 1;
  height: 13px;
  border: 0;
}

.renderer svg {
  width: 11px;
  height: 11px;
}

.symbol {
  display: flex;
  gap: 4px;
  height: 107px;
  padding: 4px 0;
  border-bottom: 1px solid #cfcfcf;
}

.preview {
  width: 97px;
  display: flex;
  align-items: center;
  justify-content: center;
}

.preview span {
  width: 37px;
  height: 3px;
  background: #a5f700;
}

.symbol-tree {
  flex: 1;
  border: 1px solid #cfcfcf;
  background: #fff;
}

.symbol-tree li {
  display: flex;
  align-items: center;
  gap: 2px;
  height: 12px;
  padding-left: 30px;
}

.symbol-tree .root {
  height: 13px;
  padding-left: 4px;
  font-weight: 700;
}

.symbol-tree .root::before {
  content: "";
  width: 6px;
  height: 4px;
  margin-right: 3px;
  background: #333;
  clip-path: polygon(0 0, 100% 0, 50% 100%);
}

.symbol-tree .child {
  background: #efefef;
}

.swatch {
  width: 10px;
  height: 3px;
  background: #a5f700;
}

.child .swatch {
  background: #62d31f;
}

.symbol-buttons {
  display: grid;
  grid-template-columns: 18px 18px;
  grid-auto-rows: 17px;
  gap: 7px 5px;
  padding-top: 7px;
}

.layer-type {
  display: flex;
  align-items: center;
  margin: 5px 6px 7px 0;
}

.layer-type label {
  width: 62px;
  white-space: nowrap;
}

.layer-type select {
  flex: 1;
}

.form {
  display: grid;
  grid-template-columns: 52px 1fr 68px 20px;
  grid-auto-rows: 15px;
  align-items: center;
  gap: 6px 4px;
  padding: 0 12px 0 6px;
}

.form label {
  white-space: nowrap;
}

.span {
  grid-column: span 2;
}

.color {
  display: flex;
  height: 15px;
  border: 1px solid #d2d2d2;
}

.color button:first-child {
  flex: 1;
  margin: 0 1px;
  border: 0;
  background: #a6ff00;
}

.color .drop {
  width: 9px;
  border: 0;
  border-left: 1px solid #d2d2d2;
}

.solid {
  width: 20px;
  height: 1px;
  background: #222;
}

.dd {
  border: 0;
  background: none;
}

.dd svg {
  width: 16px;
  height: 14px;
}

.dash-check {
  margin: 4px 0 3px 6px;
}

.dash-form {
  grid-auto-rows: auto;
}

.dashes {
  grid-column: span 2;
  height: 19px;
  margin-left: 5px;
  padding: 0 1px;
  background: #f4f4f4;
}

.dashes span {
  width: 100%;
  height: 3px;
  background: repeating-linear-gradient(90deg, #a9a9a9 0 16px, transparent 16px 20px);
}

.dash-options {
  display: grid;
  gap: 4px;
  padding: 5px 6px;
}

.off {
  color: #7b7b7b;
}

.effects {
  display: flex;
  align-items: center;
  gap: 5px;
  margin-top: auto;
}

.draw {
  margin-left: 8px;
}

.fx {
  width: 15px;
  height: 15px;
}

.rendering {
  display: flex;
  align-items: center;
  gap: 4px;
  padding: 16px 0 4px 2px;
}

.rendering::before {
  content: "";
  width: 3px;
  height: 5px;
  background: #222;
  clip-path: polygon(0 0, 100% 50%, 0 100%);
}

.actions {
  display: flex;
  gap: 4px;
}

.actions button {
  width: 30px;
  height: 15px;
}

.actions .style-menu {
  gap: 3px;
  margin-right: auto;
}

.actions .default {
  border-color: #7fbfee;
}

.marks {
  position: absolute;
  left: 0;
  top: 0;
  width: 1200px;
  height: 754px;
  pointer-events: none;
}

.marks path {
  fill: none;
  stroke: #7f00ff;
  stroke-width: 4;
  stroke-linecap: round;
  stroke-linejoin: round;
}
```
